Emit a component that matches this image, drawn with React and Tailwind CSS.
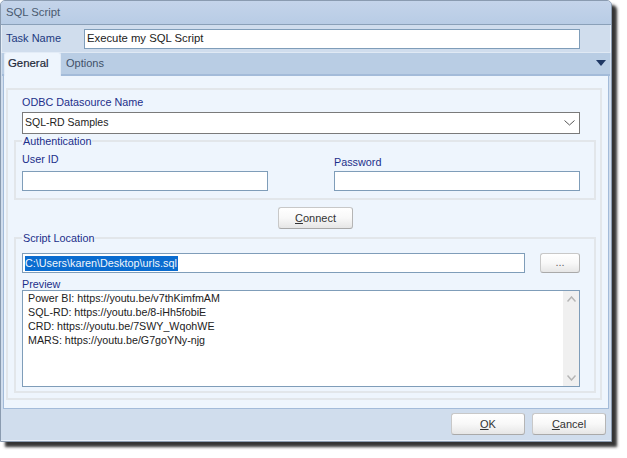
const font = { fontFamily: '"Liberation Sans", Arial, sans-serif' };

function Btn({ className, children }) {
  return (
    <button className={`rounded-[3px] border border-[#c8c8c8] border-b-[#a9a9a9] border-r-[#b5b5b5] bg-gradient-to-b from-white via-[#f8f8f8] to-[#e6e6e6] text-[11px] flex items-center justify-center ${className}`}>
      {children}
    </button>
  );
}

function Field({ className, children }) {
  return (
    <div className={`h-5 bg-white border border-[#7f9db9] flex items-center text-[#222] ${className}`}>
      {children}
    </div>
  );
}

const label = "text-[10.8px] leading-[16px] text-[#1c2f8a]";

export default function App() {
  return (
    <div className="w-[627px] h-[458px] bg-white overflow-hidden" style={font}>
      <div className="w-[612px] h-[442px] rounded-t-[5px] border border-[#8a9bb0] shadow-[5px_5px_3px_rgba(30,30,30,0.9)] bg-[#d0dded] flex flex-col">
        <div className="h-6 shrink-0 bg-gradient-to-b from-[#c4d4ea] to-[#b8cce5] border-b border-[#8aa0b8] rounded-t-[4px] flex items-center pl-[5px] text-[11.3px] text-[#4a5a70]">
          SQL Script
        </div>
        <div className="h-[28px] shrink-0 flex items-center pl-[4px] border-b border-[#e0e9f4] border-x border-x-[#e6eef7]">
          <span className="w-[78px] text-[11px] text-[#1d3a80]">Task Name</span>
          <Field className="w-[496px] pl-[2px] text-[11.3px]">Execute my SQL Script</Field>
        </div>
        <div className="h-[23px] shrink-0 mx-px bg-[#b9cde4] border-b-2 border-[#a3bbd9] flex relative">
          <div className="ml-[2px] w-[57px] h-[24px] -mt-px z-10 bg-[#eef5fd] border border-b-0 border-[#e3ecf7] rounded-t-[3px] text-[11.4px] text-[#1f2a3a] [-webkit-text-stroke:0.2px_#1f2a3a] flex items-center pl-[3px] pb-[2px]">General</div>
          <div className="ml-[5px] text-[11px] text-[#3f5068] flex items-center pb-[1px]">Options</div>
          <svg className="absolute right-[4px] top-[7px]" width="10" height="6" viewBox="0 0 10 6"><path d="M0 0H10L5 6Z" fill="#1f3864" /></svg>
        </div>
        <div className="mx-[2px] h-[333px] shrink-0 bg-[#eef5fd] border-x border-b border-[#a3bbd9] pt-[12px] pl-[2px] pr-[6px] pb-[8px]">
          <div className="h-full border-2 border-[#e2e6ea] pl-[6px] pr-[4px] flex flex-col">
            <div className={`h-[22px] shrink-0 pl-[8px] pt-[4px] ${label}`}>ODBC Datasource Name</div>
            <div className="ml-[8px] h-[22px] w-[558px] shrink-0 bg-white border border-[#7a7a7a] flex items-center pl-[2px] pr-[4px] justify-between text-[10.5px] text-[#222]">
              SQL-RD Samples
              <svg width="11" height="6" viewBox="0 0 11 6" fill="none"><path d="M0.5 0.5L5.5 5L10.5 0.5" stroke="#555" /></svg>
            </div>
            <fieldset className="-mt-px h-[67px] shrink-0 border-2 border-[#e2e6ea] pl-[6px] pr-[14px] min-w-0">
              <legend className={`px-px ${label}`}>Authentication</legend>
              <div className="flex justify-between">
                <div className="w-[246px]">
                  <div className={`h-[22px] pt-[2px] ${label}`}>User ID</div>
                  <Field className="w-[246px]" />
                </div>
                <div className="w-[246px]">
                  <div className={`h-[22px] pt-[5px] ${label}`}>Password</div>
                  <Field className="w-[246px]" />
                </div>
              </div>
            </fieldset>
            <div className="h-[37px] shrink-0 flex justify-center items-center pb-[1px] pl-[21px]">
              <Btn className="w-[75px] h-[22px] text-[#333]"><span><u>C</u>onnect</span></Btn>
            </div>
            <fieldset className="h-[163px] shrink-0 border-2 border-[#e2e6ea] pl-[6px] pr-[14px] min-w-0 -mt-[7px]">
              <legend className={`px-px ${label}`}>Script Location</legend>
              <div className="flex justify-between mt-[7px]">
                <Field className="w-[503px] pl-[2px] text-[10.8px]"><span className="bg-[#0a6cd0] text-[#f2f6fb] leading-[15px] pr-px">C:\Users\karen\Desktop\urls.sql</span></Field>
                <Btn className="w-[40px] h-[20px] pb-[1px] text-[#666]">...</Btn>
              </div>
              <div className={`h-[17px] pt-[3px] ${label}`}>Preview</div>
              <div className="h-[97px] bg-white border border-[#7f9db9] flex">
                <div className="flex-1 pl-[5px] text-[10.7px] leading-[14px] text-[#222]">
                  <div>Power BI: https://youtu.be/v7thKimfmAM</div>
                  <div>SQL-RD: https://youtu.be/8-iHh5fobiE</div>
                  <div>CRD: https://youtu.be/7SWY_WqohWE</div>
                  <div>MARS: https://youtu.be/G7goYNy-njg</div>
                </div>
                <div className="w-[16px] bg-[#f0f0f0] flex flex-col justify-between items-center py-[5px]">
                  <svg width="9" height="6" viewBox="0 0 9 6" fill="none"><path d="M0.5 5.5L4.5 1L8.5 5.5" stroke="#b5b5b5" strokeWidth="1.5" /></svg>
                  <svg width="9" height="6" viewBox="0 0 9 6" fill="none"><path d="M0.5 0.5L4.5 5L8.5 0.5" stroke="#b5b5b5" strokeWidth="1.5" /></svg>
                </div>
              </div>
            </fieldset>
          </div>
        </div>
        <div className="flex-1 flex justify-end items-start pt-[4px] pr-[5px] gap-[7px] border-b border-[#e6eef7]">
          <Btn className="w-[74px] h-[22px] text-[#333]"><span><u>O</u>K</span></Btn>
          <Btn className="w-[74px] h-[22px] text-[#333]"><span><u>C</u>ancel</span></Btn>
        </div>
      </div>
    </div>
  );
}
